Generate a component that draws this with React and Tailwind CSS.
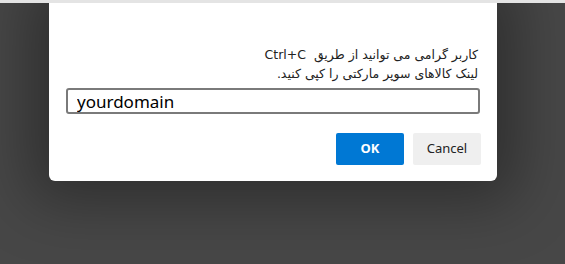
import React from "react";

export default function App() {
    return (
        <div className="w-[565px] h-[264px] bg-[#474747] border-t-[3px] border-[#e4e4e4] overflow-hidden" style={{ fontFamily: '"Noto Sans", "DejaVu Sans", sans-serif' }}>
            <div className="relative -mt-[3px] ml-[49px] w-[448px] bg-white rounded-b-md shadow-[0_0_60px_20px_rgba(0,0,0,0.35)] px-[17px] pt-[45px] pb-[16px]">
                <div dir="rtl" className="text-right pr-[2px] text-[12.5px] leading-[19px] text-[#222]" style={{ fontFamily: '"DejaVu Sans", sans-serif' }}>
                    <p>کاربر گرامی می توانید از طریق&nbsp; Ctrl+C</p>
                    <p>لینک کالاهای سوپر مارکتی را کپی کنید.</p>
                </div>
                <input
                    defaultValue="yourdomain"
                    className="mt-[5px] block w-full h-[26px] border-2 border-[#7a7a7a] rounded-[3px] px-[9px] text-[17px] text-black outline-none"
                />
                <div className="flex justify-end gap-[9px] mt-[19px] -mr-[1px]">
                    <button className="w-[68px] h-[32px] bg-[#0078d4] text-white text-[13px] font-bold rounded-[2px]">OK</button>
                    <button className="w-[68px] h-[32px] bg-[#efefef] text-[#222] text-[13px] rounded-[2px]">Cancel</button>
                </div>
            </div>
        </div>
    );
}
